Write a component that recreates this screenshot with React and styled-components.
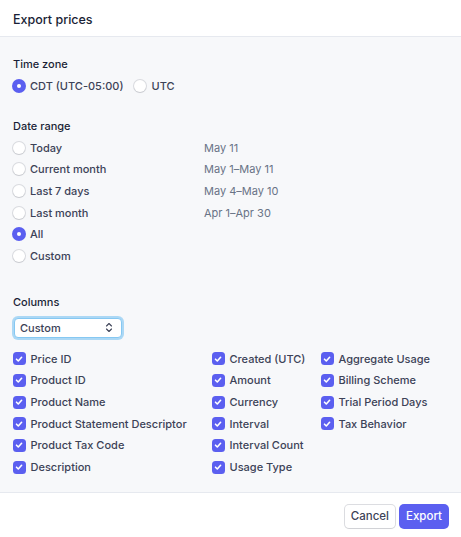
import React from "react";
import styled, { createGlobalStyle } from "styled-components";

const Global = createGlobalStyle`
  html, body { margin: 0; padding: 0; background: #fff; }
  body { font-family: Inter, "Noto Sans", sans-serif; color: #3c4257; -webkit-font-smoothing: antialiased; }
  * { box-sizing: border-box; }
`;

const Dialog = styled.div`
  width: 461px;
  height: 537px;
  display: flex;
  flex-direction: column;
  background: #fff;
`;

const Header = styled.div`
  height: 37px;
  padding: 3px 13px 0;
  display: flex;
  align-items: center;
  border-bottom: 1px solid #e6e9ef;
  font-size: 12.5px;
  color: #1a1f36;
  font-weight: 500;
`;

const Body = styled.div`
  flex: 1;
  background: #f7f8fa;
  padding: 20px 13px 0 13px;
  border-bottom: 1px solid #e6e9ef;
`;

const Section = styled.div`
  margin-bottom: ${(p) => p.$mb || 0}px;
`;

const Label = styled.div`
  font-size: 11px;
  font-weight: 500;
  color: #1a1f36;
  height: 14px;
  line-height: 14px;
  margin-bottom: ${(p) => p.$mb ?? 4}px;
`;

const InlineRow = styled.div`
  display: flex;
  gap: 11px;
`;

const Option = styled.label`
  display: flex;
  align-items: center;
  gap: 5px;
  height: 21.7px;
  font-size: 11px;
  color: #3c4257;
  font-weight: 500;
`;

const Radio = styled.span`
  width: 12px;
  height: 12px;
  border-radius: 50%;
  flex: none;
  background: ${(p) => (p.$on ? "#5b5ff0" : "#fff")};
  box-shadow: ${(p) =>
    p.$on ? "0 0 0 1px #5b5ff0" : "0 0 0 1px rgba(60,66,87,0.16), 0 1px 1px rgba(0,0,0,0.08)"};
  display: flex;
  align-items: center;
  justify-content: center;
  &::after {
    content: "";
    width: 4px;
    height: 4px;
    border-radius: 50%;
    background: #fff;
    display: ${(p) => (p.$on ? "block" : "none")};
  }
`;

const DateGrid = styled.div`
  display: grid;
  grid-template-columns: 191px 1fr;
`;

const DateHint = styled.div`
  font-size: 11px;
  color: #697386;
  height: 21.7px;
  display: flex;
  align-items: center;
`;

const Select = styled.div`
  width: 108px;
  height: 20px;
  border-radius: 4px;
  background: #fff;
  border: 1px solid #86c8f2;
  box-shadow: 0 0 0 2px rgba(122, 195, 242, 0.6);
  margin: 0 0 0 1px;
  padding: 0 8px 0 5px;
  display: flex;
  align-items: center;
  justify-content: space-between;
  font-size: 11px;
  color: #3c4257;
  font-weight: 500;
`;

const Columns = styled.div`
  display: grid;
  grid-template-columns: 199px 109px 1fr;
  margin-top: 10px;
`;

const Col = styled.div`
  display: flex;
  flex-direction: column;
`;

const Check = styled.span`
  width: 13px;
  height: 13px;
  border-radius: 3.5px;
  background: #5b5ff0;
  flex: none;
  display: flex;
  align-items: center;
  justify-content: center;
  margin-left: -0.5px;
`;

const Footer = styled.div`
  height: 44px;
  display: flex;
  justify-content: flex-end;
  align-items: center;
  gap: 5px;
  padding: 2px 13px 0 0;
`;

const Button = styled.button`
  height: 23px;
  padding: 0 6px;
  border-radius: 4px;
  font-family: inherit;
  font-size: 11.5px;
  font-weight: 500;
  border: none;
  color: ${(p) => (p.$primary ? "#fff" : "#3c4257")};
  background: ${(p) => (p.$primary ? "#5b5ff0" : "#fff")};
  box-shadow: ${(p) =>
    p.$primary ? "0 0 0 1px #5b5ff0" : "0 0 0 1px rgba(60,66,87,0.18), 0 1px 1px rgba(0,0,0,0.06)"};
`;

const CheckIcon = () => (
  <svg width="10" height="10" viewBox="0 0 10 10">
    <path d="M2.5 5.2 L4.3 7 L7.6 3.3" fill="none" stroke="#fff" strokeWidth="1.6" strokeLinecap="round" strokeLinejoin="round" />
  </svg>
);

const Chevrons = () => (
  <svg width="8" height="11" viewBox="0 0 8 11">
    <path d="M1.5 4 L4 1.5 L6.5 4 M1.5 7 L4 9.5 L6.5 7" fill="none" stroke="#3c4257" strokeWidth="1.1" strokeLinecap="round" strokeLinejoin="round" />
  </svg>
);

const CheckItem = ({ children }) => (
  <Option>
    <Check>
      <CheckIcon />
    </Check>
    {children}
  </Option>
);

const dates = [
  ["Today", "May 11"],
  ["Current month", "May 1–May 11"],
  ["Last 7 days", "May 4–May 10"],
  ["Last month", "Apr 1–Apr 30"],
  ["All", "", true],
  ["Custom", ""],
];

const cols = [
  ["Price ID", "Product ID", "Product Name", "Product Statement Descriptor", "Product Tax Code", "Description"],
  ["Created (UTC)", "Amount", "Currency", "Interval", "Interval Count", "Usage Type"],
  ["Aggregate Usage", "Billing Scheme", "Trial Period Days", "Tax Behavior"],
];

export default function App() {
  return (
    <>
      <Global />
      <Dialog>
        <Header>Export prices</Header>
        <Body>
          <Section $mb={22}>
            <Label>Time zone</Label>
            <InlineRow>
              <Option>
                <Radio $on />
                CDT (UTC-05:00)
              </Option>
              <Option>
                <Radio />
                UTC
              </Option>
            </InlineRow>
          </Section>
          <Section $mb={28}>
            <Label>Date range</Label>
            <DateGrid>
              {dates.map(([l, d, on]) => (
                <React.Fragment key={l}>
                  <Option>
                    <Radio $on={on} />
                    {l}
                  </Option>
                  <DateHint>{d}</DateHint>
                </React.Fragment>
              ))}
            </DateGrid>
          </Section>
          <Section>
            <Label $mb={9}>Columns</Label>
            <Select>
              Custom
              <Chevrons />
            </Select>
            <Columns>
              {cols.map((c, i) => (
                <Col key={i}>
                  {c.map((t) => (
                    <CheckItem key={t}>{t}</CheckItem>
                  ))}
                </Col>
              ))}
            </Columns>
          </Section>
        </Body>
        <Footer>
          <Button>Cancel</Button>
          <Button $primary>Export</Button>
        </Footer>
      </Dialog>
    </>
  );
}
